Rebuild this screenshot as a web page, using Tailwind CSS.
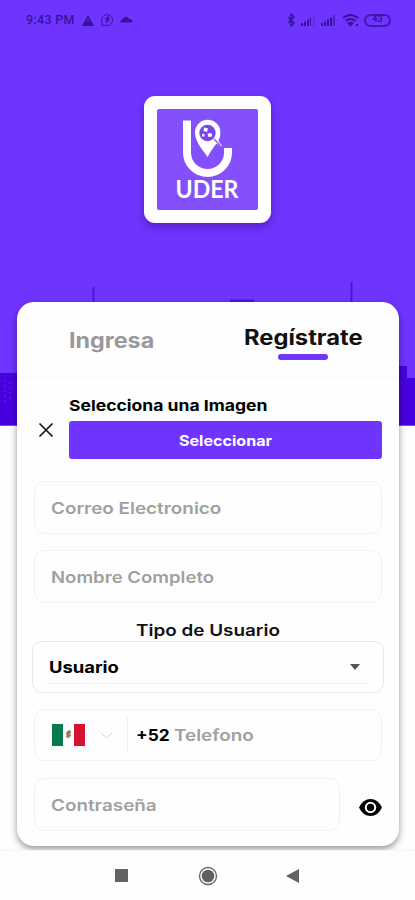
<!DOCTYPE html>
<html lang="es"><head><meta charset="utf-8"><title>UDER</title>
<script src="https://cdn.jsdelivr.net/npm/@tailwindcss/browser@4"></script></head>
<body class="bg-white font-['Inter','Liberation_Sans',sans-serif]">
<div class="relative isolate flex h-[900px] w-[415px] flex-col overflow-hidden bg-[#fefefe]">
  <!-- city backdrop -->
  <svg class="absolute left-0 top-0 -z-10" width="415" height="426" viewBox="0 0 415 426">
    <path fill="#7034ff" d="M0 0h415v425.500H0z"/>
    <path fill="#4800df" d="M0 373h17v-6h382v-1h8v12h8v47.500H0z"/>
    <path fill="#5014e0" d="M92.500 287h2v20h-2zM350.500 282h2v24h-2zM230 299.500h24v5h-24z"/>
    <path stroke="#6528ee" stroke-width="1" stroke-dasharray="2 3" d="M5 380v22M10 382v20"/>
  </svg>
  <header class="flex h-10 shrink-0 items-center justify-between pl-[26px] pr-6 text-[#35149a]">
    <div class="flex items-center">
      <span class="w-[56px] whitespace-nowrap font-[Roboto] text-[12.500px] font-medium tracking-[0.3px]">9:43 PM</span>
      <svg width="12" height="11" viewBox="0 0 12 11"><path fill="currentColor" d="M6 0l6 11H0z"/><path stroke="#7034ff" d="M6 4v3M6 8.500v1"/></svg>
      <svg class="ml-[6px]" width="14" height="14" viewBox="0 0 14 14" fill="none" stroke="currentColor"><path d="M1.500 12.500l.6-3A5.500 5.500 0 1 1 4.500 12z"/><path stroke-width="1.500" d="M7 4a2 2 0 1 1-1.500 4.500M5 6h3"/></svg>
      <svg class="ml-[6px]" width="13" height="8" viewBox="0 0 13 8"><path fill="currentColor" d="M1 6.500C0 4 2 3 3 3c1-3 5-3 6 0 3 0 4 2 3.500 3.500z"/></svg>
    </div>
    <div class="flex items-center">
      <svg width="8" height="14" viewBox="0 0 8 14" fill="none" stroke="currentColor" stroke-width="1.500"><path d="M1 4l6 6-3 3V1l3 3-6 6"/></svg>
      <svg class="ml-[6px]" width="14" height="11" viewBox="0 0 14 11"><path fill="currentColor" d="M0 8h2v3H0zM3 6.500h2V11H3zM6 4.500h2V11H6zM9 2.500h1V11H9z"/><path fill="currentColor" opacity=".25" d="M12 0h2v11h-2z"/></svg>
      <svg class="ml-[6px]" width="15" height="11" viewBox="0 0 15 11"><path fill="currentColor" d="M0 8h2v3H0zM3 6.500h2V11H3zM6 4.500h2V11H6zM9 2.500h2V11H9z"/><path fill="currentColor" opacity=".6" d="M12 0h2v11h-2z"/></svg>
      <svg class="ml-[6px]" width="17" height="13" viewBox="0 0 17 13" fill="none" stroke="currentColor" stroke-width="2"><path d="M1 4q7.500-6 15 0M3.500 7q5-4 10 0"/><path fill="currentColor" stroke="none" d="M5 9q3.500-2.500 7 0l-3.500 3.500zM14 10h2v2h-2z"/></svg>
      <span class="ml-[5px] flex h-[13px] w-[27px] items-center justify-center rounded-full border-2 border-[#35149a]/80 font-[Roboto] text-[9px] font-bold">43</span>
    </div>
  </header>

  <div class="mx-auto mt-14 flex size-[127px] shrink-0 items-center justify-center rounded-[11px] bg-white shadow-[0_4px_9px_rgba(20,0,90,0.35)]">
    <svg class="size-[101px] rounded-[2px]" viewBox="0 0 101 101">
      <path fill="#8450fb" d="M0 0h101v101H0z"/>
      <path fill="none" stroke="#fff" stroke-width="8" d="M30 11.500v32a20.500 20.500 0 0 0 41 0v-4.500"/>
      <path fill="#fff" d="M50.500 48C46 41 38 33 38 23.500a12.700 12.700 0 0 1 25.400 0c0 4-1 6-2 8l4 6-6-3C56 39 54 42 50.500 48z"/>
      <circle cx="50.500" cy="24" r="8.200" fill="#7a45ee"/>
      <path fill="#fff" d="M47 18.500l4 1-1 3.500-3.500-1zM50.500 24.500l4-.5.500 3.500-3.500.5zM45 25h2.500v2.500H45z"/>
      <path stroke="#8450fb" stroke-width="1.200" d="M57 30l6 6"/>
      <text x="18.500" y="89" textLength="63" lengthAdjust="spacingAndGlyphs" font-family="Lato, sans-serif" font-size="24.500" font-weight="700" fill="#fff">UDER</text>
    </svg>
  </div>

  <main class="ml-[17px] mt-[79px] flex h-[544px] w-[382px] shrink-0 flex-col rounded-[17px] bg-[#fefefe] shadow-[0_3px_7px_rgba(0,0,0,0.42)]">
    <nav class="flex h-[76px] shrink-0 border-b border-[#f7f7f7]">
      <div class="w-[191px] pl-[52px] pt-[25px]"><span class="block origin-left scale-x-[1.11] text-[21px] leading-[28px] font-bold text-[#999]">Ingresa</span></div>
      <div class="w-[191px] pl-[36px] pt-[22px]"><span class="block origin-left scale-x-[1.13] text-[21px] leading-[28px] font-bold text-[#111]">Regístrate</span><div class="ml-[34px] mt-[2px] h-[6px] w-[50px] rounded-full bg-[#7034ff]"></div></div>
    </nav>
    <section class="flex h-[81px] shrink-0 items-start">
      <svg class="ml-[21px] mt-[44px]" width="16" height="16" viewBox="0 0 16 16" stroke="#151515" stroke-width="1.700"><path d="M1.500 1.500l13 13M14.500 1.500l-13 13"/></svg>
      <div class="ml-[15px] pt-[17px]">
        <h2 class="h-[26px] w-[100px] origin-left scale-x-[1.17] whitespace-nowrap text-[15px] leading-[21px] font-bold text-black">Selecciona una Imagen</h2>
        <button class="flex h-[38px] w-[313px] items-center justify-center rounded-[3px] bg-[#7034ff] text-[14px] font-bold text-white"><span class="scale-x-[1.15]">Seleccionar</span></button>
      </div>
    </section>
    <div class="ml-[17px] mt-[22px] flex h-[53px] w-[348px] shrink-0 items-center rounded-[10px] border border-[#f2f2f2] pl-4"><span class="origin-left scale-x-[1.18] text-[16px] font-semibold text-[#a0a0a0]">Correo Electronico</span></div>
    <div class="ml-[17px] mt-[16px] flex h-[53px] w-[348px] shrink-0 items-center rounded-[10px] border border-[#f2f2f2] pl-4"><span class="origin-left scale-x-[1.16] text-[16px] font-semibold text-[#a0a0a0]">Nombre Completo</span></div>
    <h3 class="mt-[16px] h-[22px] text-center text-[16px] leading-[22px] font-semibold text-[#111]"><span class="inline-block scale-x-[1.18]">Tipo de Usuario</span></h3>
    <div class="ml-[15px] flex h-[52px] w-[352px] shrink-0 rounded-[10px] border border-[#e8e8e8] px-4 pb-[8px]">
      <div class="flex w-full items-center justify-between border-b border-[#f0f0f0] pr-[7px] pt-[9px]"><span class="origin-left scale-x-[1.15] text-[16px] font-bold text-black">Usuario</span><svg width="10" height="6" viewBox="0 0 10 6"><path fill="#555" d="M0 0h10L5 6z"/></svg></div>
    </div>
    <div class="ml-[17px] mt-[16px] flex h-[52px] w-[348px] shrink-0 items-center rounded-[10px] border border-[#f2f2f2] pl-[17px]">
      <svg width="33" height="22" viewBox="0 0 33 22"><path fill="#fff" d="M0 0h33v22H0z"/><path fill="#087a4d" d="M0 0h11v22H0z"/><path fill="#d51331" d="M22 0h11v22H22z"/><path fill="#a07850" d="M14 9q2-4 5-2l-1 5-3 2z"/><path fill="none" stroke="#7b9273" d="M14 12q3 4 5-1"/></svg>
      <svg class="ml-4" width="11" height="7" viewBox="0 0 11 7" fill="none" stroke="#d4d4d4"><path d="M0 1l5.500 5L11 1"/></svg>
      <div class="ml-[15px] h-[34px] w-px bg-[#ebebeb]"></div>
      <span class="ml-[8px] w-[38px] text-[16px] font-bold text-black"><span class="inline-block origin-left scale-x-[1.08]">+52</span></span>
      <span class="origin-left scale-x-[1.18] text-[16px] font-semibold text-[#a0a0a0]">Telefono</span>
    </div>
    <div class="ml-[17px] mt-[17px] flex h-[53px] shrink-0 items-center">
      <div class="flex h-full w-[306px] items-center rounded-[10px] border border-[#f2f2f2] pl-4"><span class="origin-left scale-x-[1.18] text-[16px] font-semibold text-[#a0a0a0]">Contraseña</span></div>
      <svg class="ml-[19px] mt-[5px]" width="23" height="17" viewBox="0 0 23 17"><path fill="#000" d="M0 8.500Q4 0 11.500 0T23 8.500Q19 17 11.500 17T0 8.500z"/><circle cx="11.500" cy="8.500" r="4.700" fill="none" stroke="#fff" stroke-width="2"/></svg>
    </div>
  </main>

  <footer class="z-10 mt-auto flex h-[50px] shrink-0 items-center border-t border-[#f5f5f5] bg-[#fefefe]">
    <div class="ml-[115px] size-[13px] bg-[#626262]"></div>
    <svg class="ml-[70px]" width="20" height="20" viewBox="0 0 20 20"><circle cx="10" cy="10" r="8.500" fill="none" stroke="#666" stroke-width="1.300"/><circle cx="10" cy="10" r="6.300" fill="#606060"/></svg>
    <svg class="ml-[68px]" width="13" height="14" viewBox="0 0 13 14"><path fill="#626262" d="M13 0v14L0 7z"/></svg>
  </footer>
</div>
</body></html>
